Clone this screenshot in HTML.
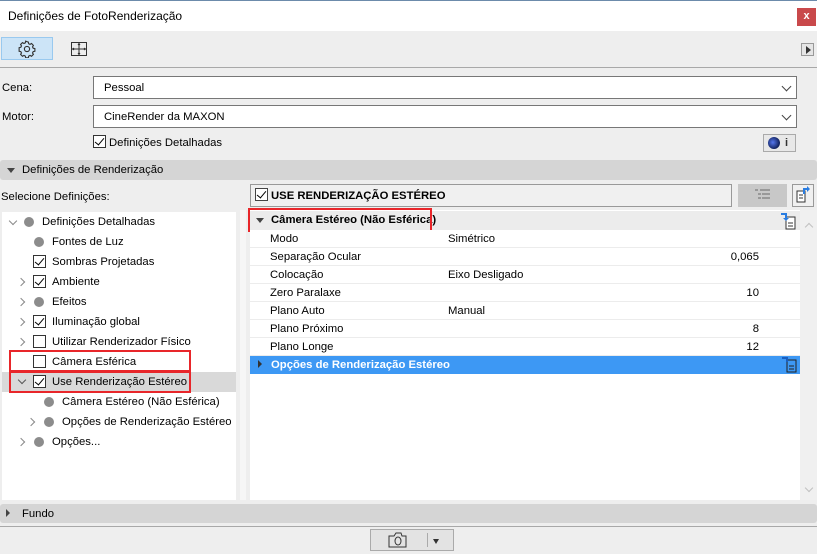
<!DOCTYPE html>
<html><head><meta charset="utf-8"><style>
*{margin:0;padding:0;box-sizing:border-box}
body{width:817px;height:554px;background:#eeeeee;font-family:"Segoe UI","Liberation Sans",sans-serif;font-size:11.3px;color:#000;position:relative;overflow:hidden}
.a{position:absolute;white-space:nowrap}
.t{margin-top:2px}
.cb{position:absolute;width:13px;height:13px;border:1px solid #333;background:#fff}
.cb.on::after{content:"";position:absolute;left:3px;top:0px;width:4px;height:8px;border:solid #000;border-width:0 1.6px 1.6px 0;transform:rotate(40deg)}
.dot{position:absolute;width:10px;height:10px;border-radius:50%;background:#8c8c8c}
.chev{position:absolute;width:6px;height:6px;border:solid #8a8a8a;border-width:0 1.3px 1.3px 0}
.r{transform:rotate(-45deg)}
.d{transform:rotate(45deg)}
.row{position:absolute;left:250px;width:550px;height:18px;border-bottom:1px solid #ececec;background:#fff}
.row span{position:absolute;top:3px}
</style></head><body>
<div class="a" style="left:0;top:0;width:817px;height:1px;background:#6c8bab"></div>
<div class="a" style="left:0;top:1px;width:817px;height:30px;background:#fff"></div>
<div class="a" style="left:8px;top:9px;font-size:12px">Definições de FotoRenderização</div>
<div class="a" style="left:797px;top:8px;width:19px;height:18px;background:#c9494b;color:#fff;font-size:11px;font-weight:bold;text-align:center;line-height:17px">x</div>

<div class="a" style="left:1px;top:37px;width:52px;height:23px;background:#cce4f7;border:1px solid #99c9ef"></div>
<svg class="a" style="left:18px;top:40px" width="18" height="18" viewBox="0 0 16 16"><path d="M8 1.5l1.2.3.3 1.5 1.2.6 1.3-.8 1.7 1.7-.8 1.3.6 1.2 1.5.3v2.4l-1.5.3-.6 1.2.8 1.3-1.7 1.7-1.3-.8-1.2.6-.3 1.5H6.8l-.3-1.5-1.2-.6-1.3.8-1.7-1.7.8-1.3-.6-1.2-1.5-.3V6.8l1.5-.3.6-1.2-.8-1.3 1.7-1.7 1.3.8 1.2-.6.3-1.5z" fill="none" stroke="#333" stroke-width="1"/><circle cx="8" cy="8" r="2.3" fill="none" stroke="#333"/></svg>
<svg class="a" style="left:71px;top:42px" width="16" height="14" viewBox="0 0 16 14"><rect x="0.5" y="0.5" width="15" height="13" fill="none" stroke="#333"/><path d="M8 1v12M1 7h14" stroke="#333"/><path d="M3 6l-1.5 1L3 8M13 6l1.5 1L13 8M7 3l1-1.5L9 3M7 11l1 1.5L9 11" stroke="#333" fill="none"/></svg>
<div class="a" style="left:801px;top:43px;width:13px;height:13px;border:1px solid #999;background:#e5e5e5"></div>
<div class="a" style="left:806px;top:46px;border-left:5px solid #333;border-top:4px solid transparent;border-bottom:4px solid transparent"></div>
<div class="a" style="left:0;top:67px;width:817px;height:1px;background:#a8a8a8"></div>

<div class="a t" style="left:2px;top:80px">Cena:</div>
<div class="a" style="left:93px;top:76px;width:704px;height:23px;background:#fff;border:1px solid #777"></div>
<div class="a t" style="left:104px;top:80px">Pessoal</div>
<div class="chev d a" style="left:783px;top:83px;width:7px;height:7px;border-color:#444;border-width:0 1px 1px 0"></div>
<div class="a t" style="left:2px;top:109px">Motor:</div>
<div class="a" style="left:93px;top:105px;width:704px;height:23px;background:#fff;border:1px solid #777"></div>
<div class="a t" style="left:104px;top:109px">CineRender da MAXON</div>
<div class="chev d a" style="left:783px;top:112px;width:7px;height:7px;border-color:#444;border-width:0 1px 1px 0"></div>
<div class="cb on" style="left:93px;top:135px"></div>
<div class="a t" style="left:109px;top:135px">Definições Detalhadas</div>
<div class="a" style="left:763px;top:134px;width:33px;height:18px;border:1px solid #aaa;background:#e8e8e8"></div>
<div class="a" style="left:768px;top:137px;width:12px;height:12px;border-radius:50%;background:radial-gradient(circle at 40% 45%,#5577ee,#10205a 70%,#aab 90%)"></div>
<div class="a" style="left:785px;top:137px;font-weight:bold;font-size:11px;color:#333">i</div>

<div class="a" style="left:0;top:160px;width:817px;height:20px;background:#d5d5d5;border-radius:3px"></div>
<div class="a" style="left:7px;top:168px;border-top:5px solid #444;border-left:4px solid transparent;border-right:4px solid transparent"></div>
<div class="a t" style="left:22px;top:162px">Definições de Renderização</div>
<div class="a t" style="left:1px;top:189px">Selecione Definições:</div>

<div class="a" style="left:2px;top:212px;width:234px;height:288px;background:#fff"></div>
<div class="a" style="left:240px;top:210px;width:6px;height:290px;background:#f6f6f6"></div>
<div class="a" style="left:250px;top:210px;width:550px;height:290px;background:#fff"></div>
<div class="a" style="left:800px;top:210px;width:17px;height:290px;background:#f0f0f0"></div>
<div class="chev a" style="left:806px;top:224px;transform:rotate(-135deg);border-color:#c0c0c0"></div>
<div class="chev d a" style="left:806px;top:485px;border-color:#c0c0c0"></div>

<!-- tree -->
<div class="a" style="left:2px;top:372px;width:234px;height:20px;background:#d9d9d9"></div>
<div class="chev d a" style="left:10px;top:218px"></div><div class="dot" style="left:24px;top:217px"></div><div class="a t" style="left:42px;top:214px">Definições Detalhadas</div>
<div class="dot" style="left:34px;top:237px"></div><div class="a t" style="left:52px;top:234px">Fontes de Luz</div>
<div class="cb on" style="left:33px;top:255px"></div><div class="a t" style="left:52px;top:254px">Sombras Projetadas</div>
<div class="chev r a" style="left:18px;top:279px"></div><div class="cb on" style="left:33px;top:275px"></div><div class="a t" style="left:52px;top:274px">Ambiente</div>
<div class="chev r a" style="left:18px;top:299px"></div><div class="dot" style="left:34px;top:297px"></div><div class="a t" style="left:52px;top:294px">Efeitos</div>
<div class="chev r a" style="left:18px;top:319px"></div><div class="cb on" style="left:33px;top:315px"></div><div class="a t" style="left:52px;top:314px">Iluminação global</div>
<div class="chev r a" style="left:18px;top:339px"></div><div class="cb" style="left:33px;top:335px"></div><div class="a t" style="left:52px;top:334px">Utilizar Renderizador Físico</div>
<div class="cb" style="left:33px;top:355px"></div><div class="a t" style="left:52px;top:354px">Câmera Esférica</div>
<div class="chev d a" style="left:19px;top:377px;border-color:#555"></div><div class="cb on" style="left:33px;top:375px"></div><div class="a t" style="left:52px;top:374px">Use Renderização Estéreo</div>
<div class="dot" style="left:44px;top:397px"></div><div class="a t" style="left:62px;top:394px">Câmera Estéreo (Não Esférica)</div>
<div class="chev r a" style="left:28px;top:419px"></div><div class="dot" style="left:44px;top:417px"></div><div class="a t" style="left:62px;top:414px">Opções de Renderização Estéreo</div>
<div class="chev r a" style="left:18px;top:439px"></div><div class="dot" style="left:34px;top:437px"></div><div class="a t" style="left:52px;top:434px">Opções...</div>
<div class="a" style="left:9px;top:350px;width:182px;height:22px;border:2px solid #e8262a"></div>
<div class="a" style="left:9px;top:371px;width:182px;height:22px;border:2px solid #e8262a"></div>

<!-- right header -->
<div class="a" style="left:250px;top:184px;width:482px;height:23px;border:1px solid #999;background:#f0f0f0"></div>
<div class="cb on" style="left:255px;top:188px;border-color:#444"></div>
<div class="a t" style="left:271px;top:188px;font-weight:bold">USE RENDERIZAÇÃO ESTÉREO</div>
<div class="a" style="left:738px;top:184px;width:49px;height:23px;background:#c8c8c8"></div>
<svg class="a" style="left:755px;top:189px" width="16" height="12"><path d="M0 1h3M5 1h10M3 5h3M7 5h8M3 9h3M7 9h8" stroke="#999" stroke-width="2"/></svg>
<div class="a" style="left:792px;top:184px;width:22px;height:23px;border:1px solid #999;background:#f0f0f0"></div>
<svg class="a" style="left:795px;top:186px" width="17" height="18"><path d="M2 5h8v11H2z" fill="#fff" stroke="#333"/><path d="M4 9h4M4 12h4" stroke="#333"/><path d="M9 8V3h4" fill="none" stroke="#2a7de1" stroke-width="2"/><path d="M12 0l3 3-3 3z" fill="#2a7de1"/></svg>

<div class="a" style="left:250px;top:211px;width:550px;height:19px;background:#ececec"></div>
<div class="a" style="left:256px;top:218px;border-top:5px solid #444;border-left:4px solid transparent;border-right:4px solid transparent"></div>
<div class="a t" style="left:271px;top:212px;font-weight:bold">Câmera Estéreo (Não Esférica)</div>
<div class="a" style="left:248px;top:208px;width:184px;height:24px;border:2px solid #e8262a"></div>
<svg class="a" style="left:780px;top:212px" width="18" height="18"><path d="M6 5h9v12H6z" fill="#fff" stroke="#333"/><path d="M8 11h5M8 14h5" stroke="#333"/><path d="M1 2h5v5" fill="none" stroke="#2a7de1" stroke-width="2"/><path d="M3 6h6l-3 3z" fill="#2a7de1"/></svg>

<div class="row" style="top:230px"><span style="left:20px">Modo</span><span style="left:198px">Simétrico</span></div>
<div class="row" style="top:248px"><span style="left:20px">Separação Ocular</span><span style="right:41px">0,065</span></div>
<div class="row" style="top:266px"><span style="left:20px">Colocação</span><span style="left:198px">Eixo Desligado</span></div>
<div class="row" style="top:284px"><span style="left:20px">Zero Paralaxe</span><span style="right:41px">10</span></div>
<div class="row" style="top:302px"><span style="left:20px">Plano Auto</span><span style="left:198px">Manual</span></div>
<div class="row" style="top:320px"><span style="left:20px">Plano Próximo</span><span style="right:41px">8</span></div>
<div class="row" style="top:338px"><span style="left:20px">Plano Longe</span><span style="right:41px">12</span></div>
<div class="a" style="left:250px;top:356px;width:550px;height:18px;background:#3d98f4"></div>
<div class="a" style="left:258px;top:360px;border-left:4px solid #333;border-top:4px solid transparent;border-bottom:4px solid transparent"></div>
<div class="a t" style="left:271px;top:357px;color:#fff;font-weight:bold">Opções de Renderização Estéreo</div>
<svg class="a" style="left:781px;top:356px" width="17" height="17"><path d="M6 4h9v12H6z" fill="#3d98f4" stroke="#222"/><path d="M8 10h5M8 13h5" stroke="#222"/><path d="M1 2h5v4" fill="none" stroke="#1a5fc0" stroke-width="2"/></svg>

<div class="a" style="left:0;top:504px;width:817px;height:19px;background:#d5d5d5;border-radius:3px"></div>
<div class="a" style="left:6px;top:509px;border-left:4px solid #444;border-top:4px solid transparent;border-bottom:4px solid transparent"></div>
<div class="a t" style="left:22px;top:506px">Fundo</div>
<div class="a" style="left:0;top:526px;width:817px;height:1px;background:#a8a8a8"></div>
<div class="a" style="left:370px;top:529px;width:84px;height:22px;background:#e3e3e3;border:1px solid #aaa"></div>
<svg class="a" style="left:388px;top:531px" width="20" height="17"><path d="M1 5h5l2-3h5l1 3h4v11H1z" fill="none" stroke="#333"/><ellipse cx="10" cy="10" rx="3" ry="4" fill="none" stroke="#333"/></svg>
<div class="a" style="left:427px;top:533px;width:1px;height:14px;background:#aaa"></div>
<div class="a" style="left:433px;top:539px;border-top:5px solid #333;border-left:3.5px solid transparent;border-right:3.5px solid transparent"></div>
</body></html>
